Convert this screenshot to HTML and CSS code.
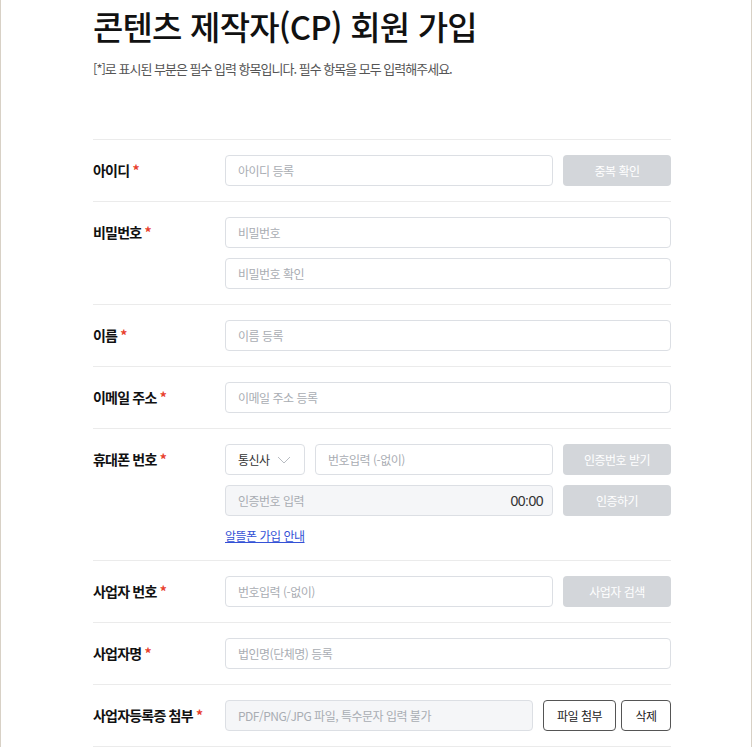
FILE: index.html
```html
<!DOCTYPE html>
<html lang="ko">
<head>
	<meta charset="utf-8">
	<title>콘텐츠 제작자(CP) 회원 가입</title>
	<link rel="stylesheet" href="styles.css">
</head>
<body>
	<div class="page">
		<div class="page-content">
			<div class="head">
				<h1 class="title">콘텐츠 제작자(CP) 회원 가입</h1>
				<p class="desc">[*]로 표시된 부분은 필수 입력 항목입니다. 필수 항목을 모두 입력해주세요.</p>
			</div>

			<div class="form">
				<div class="row">
					<div class="label">아이디 <span class="req">*</span></div>
					<div class="fields">
						<div class="line">
							<input class="input" type="text" placeholder="아이디 등록">
							<button class="btn btn-gray" type="button">중복 확인</button>
						</div>
					</div>
				</div>

				<div class="row">
					<div class="label">비밀번호 <span class="req">*</span></div>
					<div class="fields">
						<div class="line">
							<input class="input" type="password" placeholder="비밀번호">
						</div>
						<div class="line">
							<input class="input" type="password" placeholder="비밀번호 확인">
						</div>
					</div>
				</div>

				<div class="row">
					<div class="label">이름 <span class="req">*</span></div>
					<div class="fields">
						<div class="line">
							<input class="input" type="text" placeholder="이름 등록">
						</div>
					</div>
				</div>

				<div class="row">
					<div class="label">이메일 주소 <span class="req">*</span></div>
					<div class="fields">
						<div class="line">
							<input class="input" type="text" placeholder="이메일 주소 등록">
						</div>
					</div>
				</div>

				<div class="row">
					<div class="label">휴대폰 번호 <span class="req">*</span></div>
					<div class="fields">
						<div class="line">
							<div class="select">
								<span>통신사</span>
								<svg width="14" height="8" viewBox="0 0 14 8"><polyline points="1,1 7,7 13,1" fill="none" stroke="#b8bcc2" stroke-width="1"/></svg>
							</div>
							<input class="input" type="text" placeholder="번호입력 (-없이)">
							<button class="btn btn-gray" type="button">인증번호 받기</button>
						</div>
						<div class="line">
							<div class="input input-off timer-box">
								<input class="inner" type="text" placeholder="인증번호 입력" disabled>
								<span class="timer">00:00</span>
							</div>
							<button class="btn btn-gray" type="button">인증하기</button>
						</div>
						<a class="guide" href="#">알뜰폰 가입 안내</a>
					</div>
				</div>

				<div class="row">
					<div class="label">사업자 번호 <span class="req">*</span></div>
					<div class="fields">
						<div class="line">
							<input class="input" type="text" placeholder="번호입력 (-없이)">
							<button class="btn btn-gray" type="button">사업자 검색</button>
						</div>
					</div>
				</div>

				<div class="row">
					<div class="label">사업자명 <span class="req">*</span></div>
					<div class="fields">
						<div class="line">
							<input class="input" type="text" placeholder="법인명(단체명) 등록">
						</div>
					</div>
				</div>

				<div class="row">
					<div class="label">사업자등록증 첨부 <span class="req">*</span></div>
					<div class="fields">
						<div class="line line-file">
							<input class="input input-off" type="text" placeholder="PDF/PNG/JPG 파일, 특수문자 입력 불가" disabled>
							<button class="btn btn-line btn-attach" type="button">파일 첨부</button>
							<button class="btn btn-line btn-del" type="button">삭제</button>
						</div>
					</div>
				</div>
			</div>
		</div>
	</div>
</body>
</html>
```

FILE: styles.css
```css
html, body {
	margin: 0;
	padding: 0;
	height: 100%;
	overflow: hidden;
}
body {
	background-color: #ffffff;
	font-family: "Noto Sans CJK KR", "Noto Sans", sans-serif;
	color: #111111;
}
.page {
	height: 100%;
	box-sizing: border-box;
	border-left: 1px solid #d8d1c6;
	border-right: 1px solid #d8d1c6;
}
.page-content {
	width: 578px;
	margin-left: 92px;
}

/* header */
.title {
	margin: 0;
	font-size: 33px;
	font-weight: 500;
	line-height: 52px;
	letter-spacing: -0.8px;
	color: #111111;
}
.desc {
	margin: 7px 0 60px;
	font-size: 13px;
	line-height: 20px;
	letter-spacing: -1px;
	color: #555555;
}

/* form rows */
.form {
	border-top: 1px solid #ebebeb;
}
.row {
	display: flex;
	padding: 15px 0;
	border-bottom: 1px solid #ebebeb;
}
.label {
	width: 132px;
	flex-shrink: 0;
	font-size: 14px;
	font-weight: 700;
	line-height: 31px;
	letter-spacing: -0.8px;
	color: #111111;
}
.req {
	color: #e8402c;
}
.fields {
	flex: 1;
	display: flex;
	flex-direction: column;
	gap: 10px;
}
.line {
	display: flex;
	gap: 10px;
}
.line-file {
	gap: 0;
}

/* controls */
.input {
	flex: 1;
	min-width: 0;
	height: 31px;
	box-sizing: border-box;
	margin: 0;
	padding: 0 12px;
	border: 1px solid #dcdfe4;
	border-radius: 4px;
	background-color: #ffffff;
	font-family: inherit;
	font-size: 12px;
	letter-spacing: -0.5px;
	color: #222222;
	outline: none;
}
.input::placeholder,
.inner::placeholder {
	color: #a9adb3;
}
.input-off {
	background-color: #f5f6f8;
}
.timer-box {
	display: flex;
	align-items: center;
	padding-right: 9px;
}
.inner {
	flex: 1;
	min-width: 0;
	border: 0;
	padding: 0;
	background: transparent;
	font-family: inherit;
	font-size: 12px;
	letter-spacing: -0.5px;
	outline: none;
}
.timer {
	font-family: "Liberation Sans", Arial, sans-serif;
	font-size: 14px;
	color: #333333;
}
.select {
	width: 80px;
	height: 31px;
	box-sizing: border-box;
	flex-shrink: 0;
	display: flex;
	align-items: center;
	justify-content: space-between;
	padding: 0 13px 0 12px;
	border: 1px solid #dcdfe4;
	border-radius: 4px;
	font-size: 12px;
	letter-spacing: -0.5px;
	color: #333333;
}
.btn {
	height: 31px;
	flex-shrink: 0;
	margin: 0;
	padding: 0;
	border-radius: 4px;
	font-family: inherit;
	font-size: 12px;
	letter-spacing: -0.5px;
	cursor: pointer;
}
.btn-gray {
	width: 108px;
	border: 0;
	background-color: #d3d6da;
	color: #ffffff;
}
.btn-line {
	border: 1px solid #555555;
	background-color: #ffffff;
	color: #222222;
}
.btn-attach {
	width: 73px;
	margin-left: 10px;
}
.btn-del {
	width: 50px;
	margin-left: 5px;
}
.guide {
	margin-top: 1px;
	font-size: 12px;
	line-height: 18px;
	letter-spacing: -0.5px;
	color: #3552d6;
	text-decoration: underline;
	align-self: flex-start;
}
```
